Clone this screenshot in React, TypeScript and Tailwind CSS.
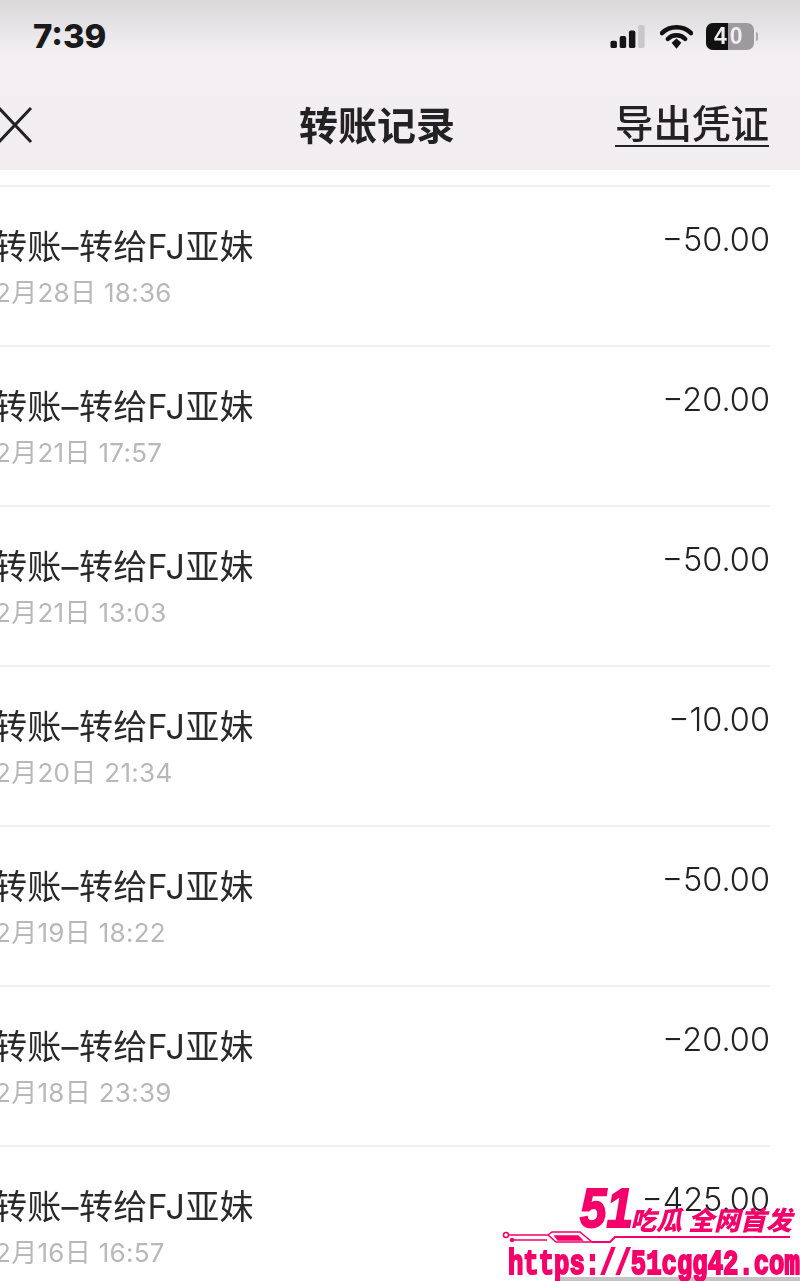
import React from 'react';

type Row = { date: string; amount: string };

const rows: Row[] = [
  { date: '2月28日 18:36', amount: '−50.00' },
  { date: '2月21日 17:57', amount: '−20.00' },
  { date: '2月21日 13:03', amount: '−50.00' },
  { date: '2月20日 21:34', amount: '−10.00' },
  { date: '2月19日 18:22', amount: '−50.00' },
  { date: '2月18日 23:39', amount: '−20.00' },
  { date: '2月16日 16:57', amount: '−425.00' },
];

const fontStack = "font-['Inter','Noto_Sans_CJK_SC',sans-serif]";

function StatusIcons() {
  return (
    <div className="flex items-center gap-[13px]">
      <svg width="38" height="24" viewBox="0 0 38 26">
        <rect x="0" y="17" width="7" height="8" rx="2" fill="#151515" />
        <rect x="10" y="12" width="7" height="13" rx="2" fill="#151515" />
        <rect x="20" y="6" width="7" height="19" rx="2" fill="#151515" />
        <rect x="30" y="0" width="7" height="25" rx="2" fill="#c9c7c9" />
      </svg>
      <svg width="33" height="26" viewBox="0 0 34 26" fill="none">
        <path d="M2 9 C10 1 24 1 32 9" stroke="#111" strokeWidth="4.5" strokeLinecap="round" />
        <path d="M8 15 C13 10 21 10 26 15" stroke="#111" strokeWidth="4.5" strokeLinecap="round" />
        <path d="M12 19 L17 14.5 L22 19 L17 25 Z" fill="#111" />
      </svg>
      <div className="relative flex h-[27px] w-[48px] overflow-hidden rounded-[7px] bg-[#9c9a9c] font-['Liberation_Sans',sans-serif] text-[23px] font-bold leading-[27px] tracking-[3px] text-[#eeeeee]">
        <div className="h-full w-[22px] bg-[#111]" />
        <span className="absolute left-[8px] top-0">40</span>
      </div>
      <div className="ml-[-11px] h-[9px] w-[2px] rounded-r bg-[#aaa]" />
    </div>
  );
}

function Watermark() {
  return (
    <div className="absolute bottom-0 right-0 h-[95px] w-[300px] text-[#f5006a]">
      <div className="absolute bottom-0 left-[55px] right-0 h-[4px] bg-[#c4c4c4]" />
      <div className="absolute left-[80px] top-[-6px] origin-left scale-x-[0.85] font-['Liberation_Sans',sans-serif] text-[56px] font-bold italic leading-none [-webkit-text-stroke:2px_#f5006a]">
        51
      </div>
      <div className="absolute left-[130px] top-[20px] whitespace-nowrap font-['Noto_Sans_CJK_SC',sans-serif] text-[26px] font-black italic leading-none">
        吃瓜 全网首发
      </div>
      <svg className="absolute left-0 top-[42px]" width="292" height="18" viewBox="0 0 292 18" fill="none" stroke="#f5006a" strokeWidth="1.5">
        <circle cx="6" cy="7" r="2.5" />
        <path d="M8 7 H48 L56 14 H92 L80 4 H52 L48 7" />
        <path d="M92 14 H110 L115 9 H290" strokeWidth="2" />
        <circle cx="12" cy="12" r="1.5" fill="#f5006a" />
        <path d="M12 12 H47" />
        <path d="M55 8 H78 L82 12 H58 Z" fill="#f5006a" />
      </svg>
      <div className="absolute left-[8px] top-[61px] origin-top-left scale-y-[1.4] whitespace-nowrap font-['Liberation_Mono',monospace] text-[25.6px] font-bold leading-none [-webkit-text-stroke:1.5px_#f5006a]">
        https://51cgg42.com
      </div>
    </div>
  );
}

export default function App() {
  return (
    <div className={`relative h-[1281px] w-[800px] overflow-hidden bg-white ${fontStack}`}>
      <div className="blur-[0.5px]">
        {/* Header */}
        <div className="h-[170px] bg-gradient-to-b from-[#dad8d9] via-[#f2eef2] via-30% to-[#f1edf1]">
          <div className="flex h-[72px] items-center justify-between pl-[33px] pr-[42px] pt-[1px]">
            <span className="text-[33px] font-extrabold leading-none text-[#1a1a1a]">7:39</span>
            <StatusIcons />
          </div>
          <div className="relative flex h-[106px] items-center justify-between pr-[31px]">
            <svg className="ml-[-2px]" width="36" height="38" viewBox="0 0 36 38" fill="none" stroke="#222" strokeWidth="3">
              <path d="M1 2 L33 36 M33 2 L1 36" />
            </svg>
            <div className="absolute left-[299px] top-0 flex h-full items-center text-[39px] font-bold leading-none text-[#222]">转账记录</div>
            <div className="border-b-[2px] border-[#222] pb-[1px] text-[38.5px] font-medium leading-[40px] text-[#222]">导出凭证</div>
          </div>
        </div>

        {/* Rows */}
        <div className="mr-[30px] mt-[15px] border-t-2 border-[#f0f0f0]">
          {rows.map((row, i) => (
            <div key={i} className="flex h-[160px] items-start justify-between border-b-2 border-[#f0f0f0] pt-[38px]">
              <div className="ml-[-7px]">
                <div className="whitespace-nowrap text-[34px] leading-[44px] tracking-[0.3px] text-[#2a2a2a]">转账–转给FJ亚妹</div>
                <div className="ml-[2px] mt-[2px] whitespace-nowrap text-[26px] leading-[44px] tracking-[0.3px] text-[#b8b8b8]">{row.date}</div>
              </div>
              <div className="mt-[-7px] text-[32.5px] font-light leading-[44px] text-[#222]">{row.amount}</div>
            </div>
          ))}
        </div>
      </div>
      <Watermark />
    </div>
  );
}
